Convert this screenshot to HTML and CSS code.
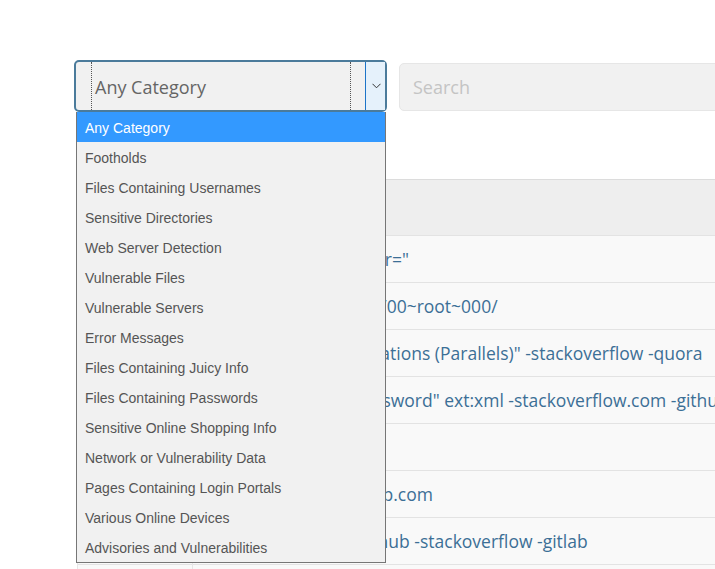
FILE: index.html
```html
<!DOCTYPE html>
<html lang="en">
<head>
<meta charset="utf-8">
<title>Google Hacking Database</title>
<link rel="stylesheet" href="styles.css">
</head>
<body>
<div class="page">
  <div class="toolbar">
    <div class="select-wrap">
      <div class="select">
        <div class="select-value"><span>Any Category</span></div>
        <div class="select-arrow">
          <svg width="9" height="6" viewBox="0 0 9 6"><polyline points="0.5,0.8 4.5,4.8 8.5,0.8" fill="none" stroke="#333" stroke-width="1"/></svg>
        </div>
      </div>
      <ul class="options">
        <li class="option selected">Any Category</li>
        <li class="option">Footholds</li>
        <li class="option">Files Containing Usernames</li>
        <li class="option">Sensitive Directories</li>
        <li class="option">Web Server Detection</li>
        <li class="option">Vulnerable Files</li>
        <li class="option">Vulnerable Servers</li>
        <li class="option">Error Messages</li>
        <li class="option">Files Containing Juicy Info</li>
        <li class="option">Files Containing Passwords</li>
        <li class="option">Sensitive Online Shopping Info</li>
        <li class="option">Network or Vulnerability Data</li>
        <li class="option">Pages Containing Login Portals</li>
        <li class="option">Various Online Devices</li>
        <li class="option">Advisories and Vulnerabilities</li>
      </ul>
    </div>
    <div class="search">Search</div>
  </div>

  <table class="results">
    <thead>
      <tr><th class="col-date">Date Added</th><th class="col-dork">Dork</th></tr>
    </thead>
    <tbody>
      <tr><td class="col-date">2024-05-10</td><td class="col-dork"><a>intitle:"Login" inurl:"usr="</a></td></tr>
      <tr><td class="col-date">2024-05-10</td><td class="col-dork"><a>intitle:"index of" inurl:/00~root~000/</a></td></tr>
      <tr><td class="col-date">2024-05-10</td><td class="col-dork"><a>allintitle:"Client Applications (Parallels)" -stackoverflow -quora</a></td></tr>
      <tr><td class="col-date">2024-05-10</td><td class="col-dork"><a>inurl:setup intext:"password" ext:xml -stackoverflow.com -github</a></td></tr>
      <tr><td class="col-date">2024-05-10</td><td class="col-dork"><a>inurl:/admin.php</a></td></tr>
      <tr><td class="col-date">2024-05-10</td><td class="col-dork"><a>intitle:"index of" +gitlab.com</a></td></tr>
      <tr><td class="col-date">2024-05-10</td><td class="col-dork"><a>"DB_PASSWORD:" -github -stackoverflow -gitlab</a></td></tr>
      <tr><td class="col-date">2024-05-10</td><td class="col-dork"><a>intitle:"index of" "backup"</a></td></tr>
    </tbody>
  </table>
</div>
</body>
</html>
```

FILE: styles.css
```css
html, body {
  margin: 0;
  padding: 0;
  overflow: hidden;
  background: #ffffff;
}

body {
  font-family: "Open Sans", "Liberation Sans", sans-serif;
}

.page {
  width: 1100px;
  padding: 60px 0 0 74px;
}

.toolbar {
  display: flex;
  align-items: flex-start;
  gap: 12px;
}

.select-wrap {
  position: relative;
  width: 313px;
  flex: none;
}

.select {
  box-sizing: border-box;
  height: 52px;
  border: 2px solid #4b7b9b;
  border-radius: 5px;
  background: #f1f1f1;
  display: flex;
}

.select-value {
  box-sizing: border-box;
  width: 260px;
  margin-left: 15px;
  margin-right: 14px;
  border-left: 1px dotted #555;
  border-right: 1px dotted #555;
  padding: 2px 0 0 3px;
  display: flex;
  align-items: center;
  font-size: 18px;
  color: #656565;
}

.select-arrow {
  box-sizing: border-box;
  width: 20px;
  background: #e5f1fb;
  border-left: 1px solid #1c74c8;
  display: flex;
  align-items: center;
  justify-content: center;
  padding-left: 1px;
}

.options {
  position: absolute;
  top: 52px;
  left: 2px;
  width: 310px;
  box-sizing: border-box;
  margin: 0;
  padding: 0;
  list-style: none;
  background: #f1f1f1;
  border: 1px solid #767676;
  border-top: none;
  z-index: 10;
}

.option {
  box-sizing: border-box;
  height: 30px;
  line-height: 30px;
  padding: 1px 0 0 8px;
  font-family: "Liberation Sans", Arial, sans-serif;
  font-size: 14px;
  color: #555555;
  white-space: nowrap;
  overflow: hidden;
}

.option.selected {
  background: #3399ff;
  color: #ffffff;
}

.search {
  box-sizing: border-box;
  flex: 1;
  margin-top: 3px;
  height: 48px;
  border: 1px solid #e6e6e6;
  border-radius: 5px;
  background: #f1f1f1;
  padding-left: 13px;
  display: flex;
  align-items: center;
  font-size: 18px;
  color: #c4c4c4;
}

.results {
  margin-top: 67px;
  margin-left: 3px;
  width: 1000px;
  border-collapse: collapse;
  font-size: 17.5px;
}

.results th {
  height: 55px;
  background: #eeeeee;
  border-top: 1px solid #dcdcdc;
  text-align: left;
  font-weight: 600;
  color: #444;
  padding: 0 10px;
}

.results td {
  height: 46px;
  background: #f9f9f9;
  border-top: 1px solid #e3e3e3;
  padding: 0 10px;
  white-space: nowrap;
}

.results td, .results th {
  border-left: 1px solid #e6e6e6;
}

.col-date {
  box-sizing: border-box;
  width: 115px;
  color: #555;
}

.results a {
  color: #3c6f96;
  text-decoration: none;
}
```
